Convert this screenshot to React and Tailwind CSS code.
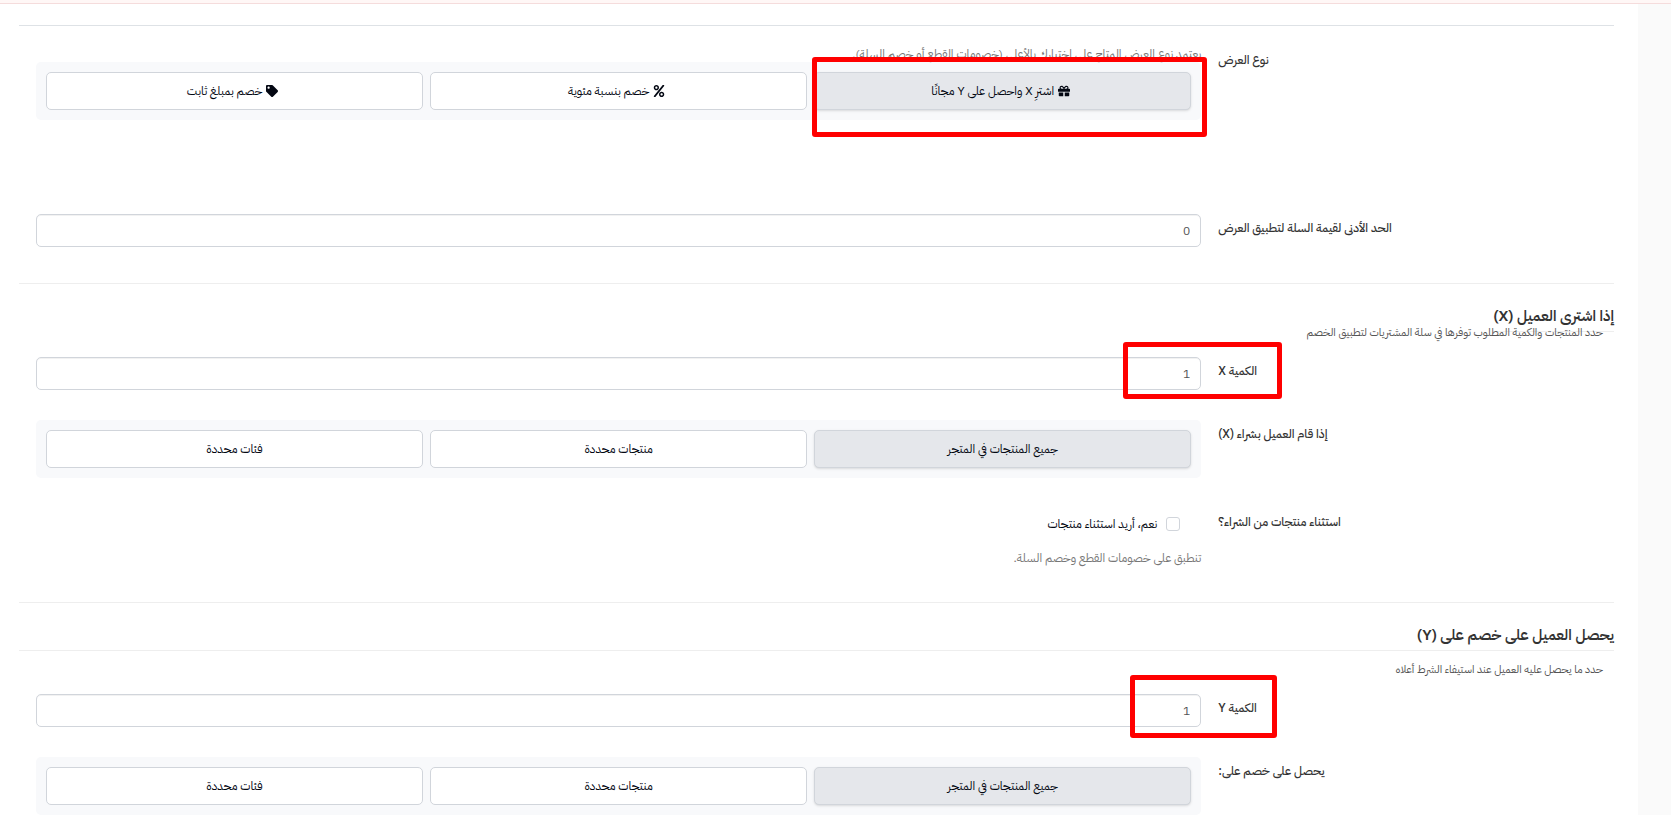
import { useState } from 'react';
import clsx from 'clsx';
import { FaGift, FaPercent, FaTag } from 'react-icons/fa';

const offerTypes = [
    { value: 'bxgy', label: 'اشترِ X واحصل على Y مجانًا', icon: FaGift },
    { value: 'percent', label: 'خصم بنسبة مئوية', icon: FaPercent },
    { value: 'fixed', label: 'خصم بمبلغ ثابت', icon: FaTag },
];

const productScopes = [
    { value: 'all', label: 'جميع المنتجات في المتجر' },
    { value: 'products', label: 'منتجات محددة' },
    { value: 'categories', label: 'فئات محددة' },
];

// Red frame drawn over the control it points at
const Highlight = ({ className }) => (
    <div className={clsx('absolute z-10 pointer-events-none rounded-[3px] border-5 border-[#ff0000]', className)} />
);

const Row = ({ label, htmlFor, className, children }) => (
    <div className={clsx('flex items-start', className)}>
        <div className="w-1/4 pt-1 pl-[3px] text-left text-xs leading-5 font-medium text-[#333]">
            {htmlFor ? <label htmlFor={htmlFor}>{label}</label> : <span>{label}</span>}
        </div>
        <div className="w-3/4 pr-[14px] pl-[17px]">{children}</div>
    </div>
);

const NumberField = ({ id, defaultValue, children }) => (
    <div className="relative">
        <input
            id={id}
            type="text"
            inputMode="numeric"
            defaultValue={defaultValue}
            className="block w-full h-[33px] px-[10px] rounded-[5px] border border-[#d1d5db] bg-white text-xs text-[#555] inset-shadow-2xs"
        />
        {children}
    </div>
);

const OptionGroup = ({ label, options, highlight }) => {
    const [selected, setSelected] = useState(options[0].value);

    return (
        <div role="group" aria-label={label} className="grid grid-cols-3 gap-[7px] p-[10px] rounded-[5px] bg-[#f8f9fb]">
            {options.map((option) => (
                <div key={option.value} className="relative">
                    <button
                        type="button"
                        aria-pressed={selected === option.value}
                        onClick={() => setSelected(option.value)}
                        className={clsx(
                            'flex items-center justify-center gap-1 w-full h-[38px] rounded-[5px] border border-[#d1d5db] text-xs text-[#030712]',
                            selected === option.value ? 'bg-[#e5e7eb] shadow-sm' : 'bg-white'
                        )}
                    >
                        {option.icon && <option.icon className="w-3 h-3 ms-1" />}
                        {option.label}
                    </button>
                    {highlight === option.value && (
                        <Highlight className="-top-[15px] -bottom-[27px] -left-[2px] -right-[16px]" />
                    )}
                </div>
            ))}
        </div>
    );
};

const SectionHeading = ({ children, className }) => (
    <h2 className={clsx('mt-5 pb-[3px] border-b border-[#eee] text-[15px] leading-6 font-semibold text-[#333]', className)}>
        {children}
    </h2>
);

export default function App() {
    return (
        <div
            dir="rtl"
            className="min-h-screen bg-[#fafafa] font-['IBM_Plex_Sans_Arabic','DejaVu_Sans_Condensed','DejaVu_Sans',sans-serif]"
        >
            <div className="h-1 bg-[#fff7f6] border-b border-[#f5dcdc]" />

            <main className="mr-[33px] bg-white pt-[21px] pl-[19px] pr-6">
                <form>
                    <hr className="border-[#dee2e6]" />

                    <Row label="نوع العرض" className="mt-5">
                        <p className="text-xs leading-4 text-[#777]">
                            يعتمد نوع العرض المتاح على اختيارك بالأعلى (خصومات القطع أو خصم السلة).
                        </p>
                        <OptionGroup label="نوع العرض" options={offerTypes} highlight="bxgy" />
                    </Row>

                    <Row label="الحد الأدنى لقيمة السلة لتطبيق العرض" htmlFor="min-cart" className="mt-[94px]">
                        <NumberField id="min-cart" defaultValue="0" />
                    </Row>

                    <section>
                        <hr className="mt-9 border-[#eee]" />
                        <SectionHeading className="w-fit">إذا اشترى العميل (X)</SectionHeading>
                        <p className="-mt-2 pr-[11px] text-[11px] leading-[18px] text-[#555]">
                            حدد المنتجات والكمية المطلوب توفرها في سلة المشتريات لتطبيق الخصم
                        </p>

                        <Row label="الكمية X" htmlFor="qty-x" className="mt-[15px]">
                            <NumberField id="qty-x" defaultValue="1">
                                <Highlight className="-top-[15px] -bottom-[9px] -right-[81px] w-[159px]" />
                            </NumberField>
                        </Row>

                        <Row label="إذا قام العميل بشراء (X)" className="mt-[30px]">
                            <OptionGroup label="إذا قام العميل بشراء (X)" options={productScopes} />
                        </Row>

                        <Row label="استثناء منتجات من الشراء؟" className="mt-[30px]">
                            <div className="flex items-center gap-[9px] h-8 pr-[21px]">
                                <input
                                    id="exclude-products"
                                    type="checkbox"
                                    className="appearance-none w-[14px] h-[14px] rounded-[3px] border border-[#d1d5db] bg-white checked:bg-gray-700"
                                />
                                <label htmlFor="exclude-products" className="text-xs text-[#030712]">
                                    نعم، أريد استثناء منتجات
                                </label>
                            </div>
                            <p className="mt-[10px] text-xs leading-4 text-[#777]">تنطبق على خصومات القطع وخصم السلة.</p>
                        </Row>
                    </section>

                    <section>
                        <hr className="mt-9 border-[#eee]" />
                        <SectionHeading>يحصل العميل على خصم على (Y)</SectionHeading>
                        <p className="mt-[10px] pr-[11px] text-[11px] leading-[18px] text-[#555]">
                            حدد ما يحصل عليه العميل عند استيفاء الشرط أعلاه
                        </p>

                        <Row label="الكمية Y" htmlFor="qty-y" className="mt-[15px]">
                            <NumberField id="qty-y" defaultValue="1">
                                <Highlight className="-top-[19px] -bottom-[11px] -right-[76px] w-[147px]" />
                            </NumberField>
                        </Row>

                        <Row label="يحصل على خصم على:" className="mt-[30px]">
                            <OptionGroup label="يحصل على خصم على" options={productScopes} />
                        </Row>
                    </section>
                </form>
            </main>
        </div>
    );
}
